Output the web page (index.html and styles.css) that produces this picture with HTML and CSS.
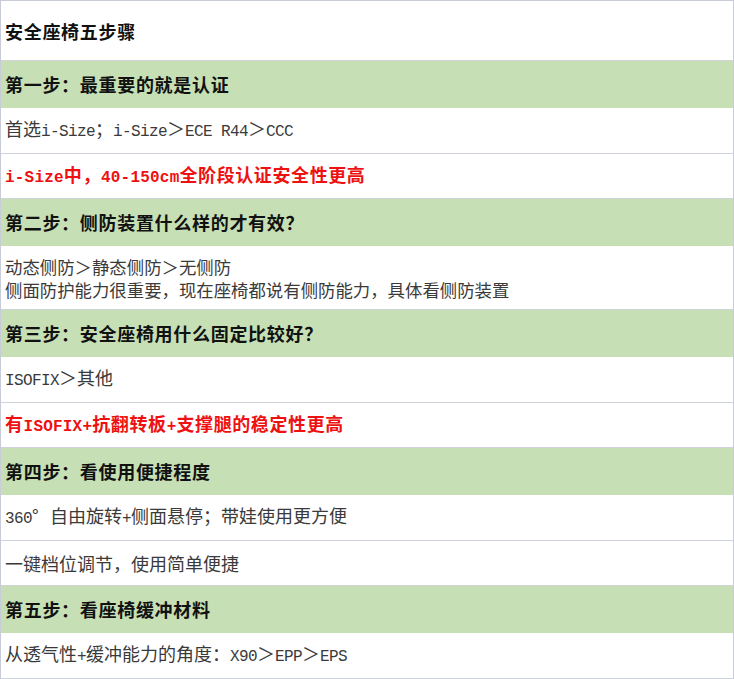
FILE: index.html
```html
<!DOCTYPE html>
<html lang="zh-CN">
<head>
<meta charset="utf-8">
<title>安全座椅五步骤</title>
<link rel="stylesheet" href="styles.css">
</head>
<body>
<div class="sheet">
  <div class="row title"><span>安全座椅五步骤</span></div>
  <div class="row step"><span>第一步：最重要的就是认证</span></div>
  <div class="row"><span>首选<span class="en">i-Size</span>；<span class="en">i-Size</span>＞<span class="en">ECE R44</span>＞<span class="en">CCC</span></span></div>
  <div class="row hl short"><span><span class="en">i-Size</span>中，<span class="en">40-150cm</span>全阶段认证安全性更高</span></div>
  <div class="row step"><span>第二步：侧防装置什么样的才有效？</span></div>
  <div class="row tall"><span>动态侧防＞静态侧防＞无侧防<br>侧面防护能力很重要，现在座椅都说有侧防能力，具体看侧防装置</span></div>
  <div class="row step"><span>第三步：安全座椅用什么固定比较好？</span></div>
  <div class="row"><span><span class="en">ISOFIX</span>＞其他</span></div>
  <div class="row hl short"><span>有<span class="en">ISOFIX+</span>抗翻转板<span class="en">+</span>支撑腿的稳定性更高</span></div>
  <div class="row step"><span>第四步：看使用便捷程度</span></div>
  <div class="row"><span><span class="en">360</span><span class="fw">°</span>自由旋转<span class="en">+</span>侧面悬停；带娃使用更方便</span></div>
  <div class="row short"><span>一键档位调节，使用简单便捷</span></div>
  <div class="row step"><span>第五步：看座椅缓冲材料</span></div>
  <div class="row"><span>从透气性<span class="en">+</span>缓冲能力的角度：<span class="en">X90</span>＞<span class="en">EPP</span>＞<span class="en">EPS</span></span></div>
</div>
</body>
</html>
```
FILE: styles.css
```css
html, body {
  margin: 0;
  padding: 0;
  background: #ffffff;
}

.sheet {
  width: 734px;
  box-sizing: border-box;
  border-top: 1px solid #c8ccd8;
  border-left: 1px solid #c8ccd8;
  border-right: 1px solid #c8ccd8;
  font-family: "Noto Sans CJK SC", "Noto Sans", sans-serif;
  font-size: 18px;
  color: #3a3a3a;
}

.row {
  display: flex;
  align-items: center;
  box-sizing: border-box;
  height: 46px;
  padding: 0 4px;
  border-bottom: 1px solid #d0d3db;
  line-height: 23px;
}

.row.short {
  height: 45px;
}

.row.title {
  height: 60px;
  padding-top: 2px;
  font-weight: 700;
  color: #111111;
  letter-spacing: 0.7px;
}

.row.step {
  height: 47px;
  background: #c6dfb4;
  border-bottom-color: #c6dfb4;
  font-weight: 700;
  color: #111111;
  letter-spacing: 0.7px;
}

.row.tall {
  height: 64px;
  font-size: 17.4px;
}

.row.hl {
  color: #ee1111;
  font-weight: 700;
  letter-spacing: 0.6px;
}

.en {
  font-family: "Liberation Mono", monospace;
  font-size: 16px;
  letter-spacing: -0.6px;
}

.hl .en {
  letter-spacing: 0.2px;
}

.fw {
  display: inline-block;
  width: 18px;
}
```
